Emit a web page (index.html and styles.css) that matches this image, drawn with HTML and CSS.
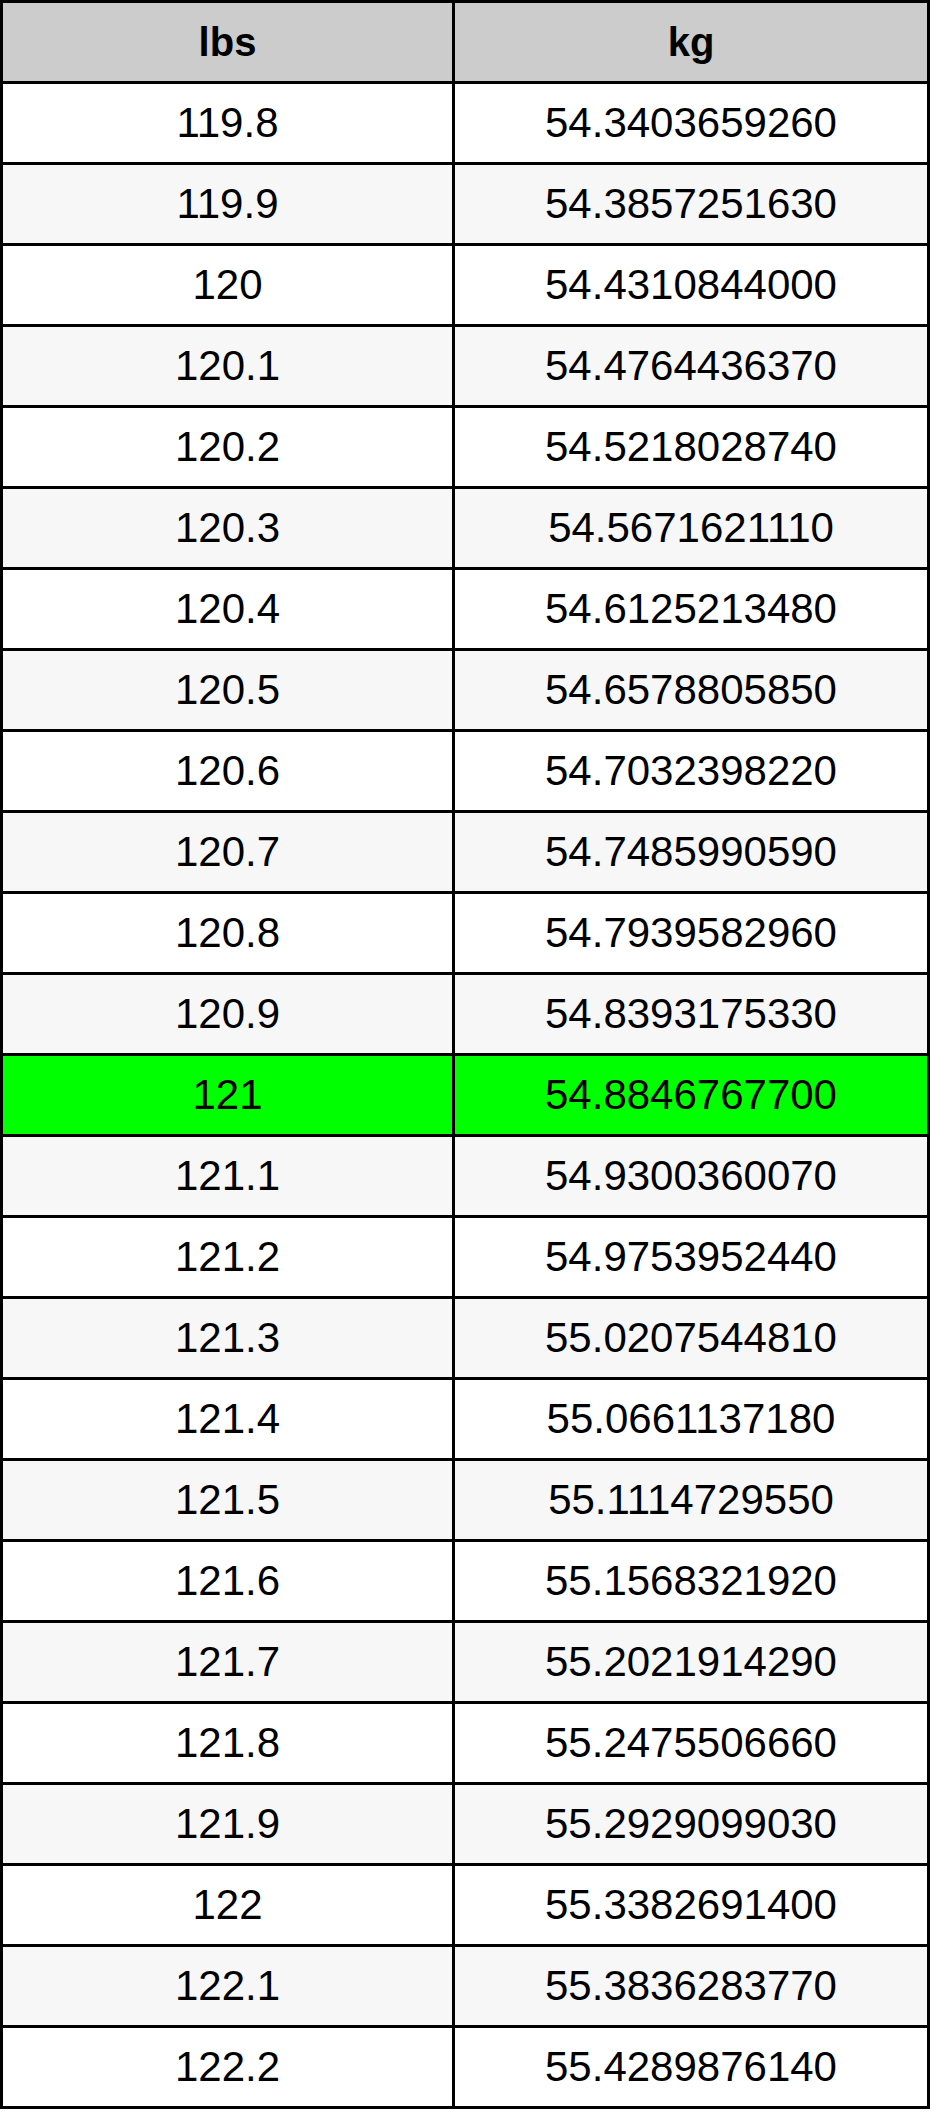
FILE: index.html
```html
<!DOCTYPE html>
<html lang="en">
<head>
<meta charset="utf-8">
<title>lbs to kg</title>
<link rel="stylesheet" href="styles.css">
</head>
<body>
<table class="conv">
  <colgroup><col class="c1"><col class="c2"></colgroup>
  <thead>
    <tr><th>lbs</th><th>kg</th></tr>
  </thead>
  <tbody>
    <tr><td>119.8</td><td>54.3403659260</td></tr>
    <tr><td>119.9</td><td>54.3857251630</td></tr>
    <tr><td>120</td><td>54.4310844000</td></tr>
    <tr><td>120.1</td><td>54.4764436370</td></tr>
    <tr><td>120.2</td><td>54.5218028740</td></tr>
    <tr><td>120.3</td><td>54.5671621110</td></tr>
    <tr><td>120.4</td><td>54.6125213480</td></tr>
    <tr><td>120.5</td><td>54.6578805850</td></tr>
    <tr><td>120.6</td><td>54.7032398220</td></tr>
    <tr><td>120.7</td><td>54.7485990590</td></tr>
    <tr><td>120.8</td><td>54.7939582960</td></tr>
    <tr><td>120.9</td><td>54.8393175330</td></tr>
    <tr class="hl"><td>121</td><td>54.8846767700</td></tr>
    <tr><td>121.1</td><td>54.9300360070</td></tr>
    <tr><td>121.2</td><td>54.9753952440</td></tr>
    <tr><td>121.3</td><td>55.0207544810</td></tr>
    <tr><td>121.4</td><td>55.0661137180</td></tr>
    <tr><td>121.5</td><td>55.1114729550</td></tr>
    <tr><td>121.6</td><td>55.1568321920</td></tr>
    <tr><td>121.7</td><td>55.2021914290</td></tr>
    <tr><td>121.8</td><td>55.2475506660</td></tr>
    <tr><td>121.9</td><td>55.2929099030</td></tr>
    <tr><td>122</td><td>55.3382691400</td></tr>
    <tr><td>122.1</td><td>55.3836283770</td></tr>
    <tr><td>122.2</td><td>55.4289876140</td></tr>
  </tbody>
</table>
</body>
</html>
```
FILE: styles.css
```css
html, body {
  margin: 0;
  padding: 0;
  background: #fff;
}
.conv {
  table-layout: fixed;
  width: 930px;
  border-collapse: separate;
  border-spacing: 3px;
  background: #000;
  font-family: "Liberation Sans", Arial, sans-serif;
  font-size: 42px;
  color: #000;
}
.c1 { width: 449px; }
.c2 { width: 472px; }
.conv th,
.conv td {
  height: 78px;
  padding: 0;
  text-align: center;
  vertical-align: middle;
  line-height: 78px;
  background: #fff;
}
.conv th {
  background: #cccccc;
  font-weight: bold;
  font-size: 40px;
}
.conv tbody tr:nth-child(even) td {
  background: #f7f7f7;
}
.conv tbody tr.hl td {
  background: #00ff00;
}
```
